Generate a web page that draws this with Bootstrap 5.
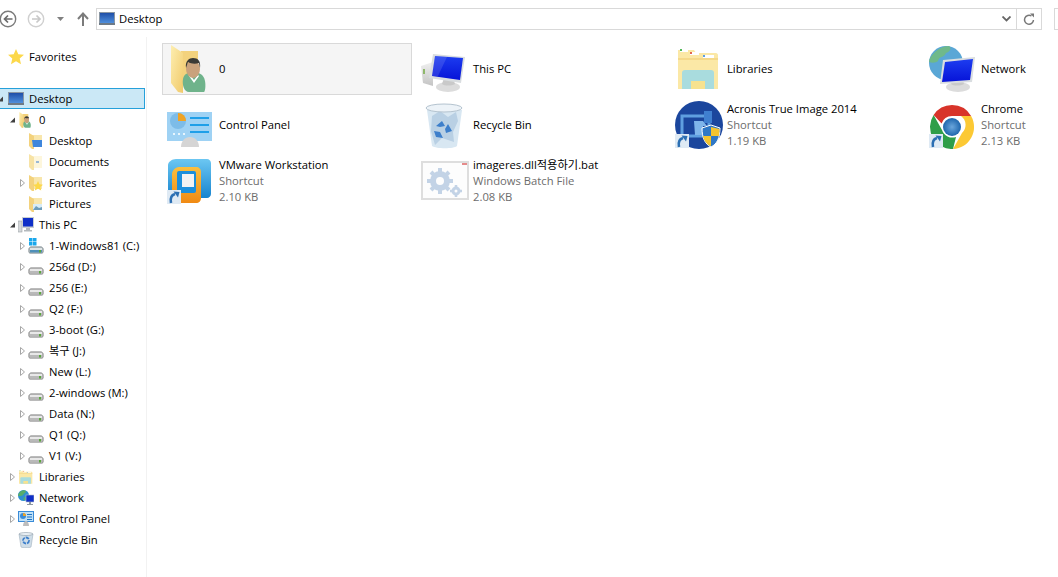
<!DOCTYPE html>
<html lang="en">
  <head>
    <meta charset="UTF-8" />
    <title>Desktop</title>
    <link rel="stylesheet" href="https://cdn.jsdelivr.net/npm/bootstrap@5.3.2/dist/css/bootstrap.min.css" />
    <script src="https://cdn.jsdelivr.net/npm/bootstrap@5.3.2/dist/js/bootstrap.bundle.min.js"></script>
    <style>
      html, body { height: 577px; overflow: hidden; }
      body { font-family: "Open Sans", "Noto Sans CJK KR", sans-serif; font-size: 11.25px; line-height: 16px; color: #000; background: #fff; }
      .icon-defs { display: block; width: 0; height: 0; }
      .topbar { height: 37px; padding-top: 1px; }
      .topbar svg { flex: none; }
      .gap-fwd { margin-left: 10px; }
      .gap-caret { margin-left: 12px; }
      .gap-up { margin-left: 13px; }
      .addr { flex: 1 1 auto; height: 22px; margin-left: 7px; border: 1px solid #d9d9d9; }
      .addr-text { flex: 1 1 auto; padding-left: 2px; }
      .addr-text svg { margin-right: 4px; }
      .addr-chev { width: 20px; }
      .addr-ref { width: 25px; border-left: 1px solid #d9d9d9; }
      .searchbox { flex: none; width: 4px; height: 22px; margin-left: 12px; border: 1px solid #d9d9d9; border-right: 0; }
      .main-area { height: 540px; }
      .nav-pane { flex: none; width: 147px; padding-top: 9px; border-right: 1px solid #f2f2f2; }
      .tree-row { height: 21px; white-space: nowrap; }
      .tree-row.lv1 { padding-left: 10px; }
      .tree-row.lv2 { padding-left: 20px; }
      .tree-row .arr { flex: none; width: 8px; height: 8px; }
      .tree-row .ico { flex: none; width: 16px; height: 16px; margin-right: 5px; }
      .tree-row.picked { background: #cbe8f6; border: 1px solid #26a0da; border-left: 0; margin-right: 1px; }
      .tree-gap { height: 21px; }
      .files { display: grid; grid-template-columns: repeat(3, 250px) 134px; grid-template-rows: 54px 56px 56px; column-gap: 4px; align-content: start; padding: 6px 0 0 15px; }
      .tile { padding-left: 5px; height: 56px; }
      .tile.top-tile { height: 52px; }
      .tile.hit { background: #f5f5f5; box-shadow: inset 0 0 0 1px #d9d9d9; }
      .tile svg { flex: none; width: 48px; height: 48px; margin-right: 4px; }
      .sub { color: #6d6d6d; }
    </style>
  </head>
  <body>
    <svg class="icon-defs" xmlns="http://www.w3.org/2000/svg">
      <defs>
        <linearGradient id="gY" x1="0" y1="0" x2="1" y2="1"><stop offset="0" stop-color="#fdeeb0"/><stop offset="1" stop-color="#f1ca6b"/></linearGradient>
        <linearGradient id="gB" x1="0" y1="0" x2="0" y2="1"><stop offset="0" stop-color="#1d3df0"/><stop offset="1" stop-color="#0613d8"/></linearGradient>
        <linearGradient id="gD" x1="0" y1="0" x2="0" y2="1"><stop offset="0" stop-color="#1f4fa8"/><stop offset="1" stop-color="#4f8fdc"/></linearGradient>
        <linearGradient id="gG" x1="0" y1="0" x2="0" y2="1"><stop offset="0" stop-color="#f0f0f0"/><stop offset="1" stop-color="#c4c4c4"/></linearGradient>
        <radialGradient id="gC"><stop offset="0" stop-color="#6aa6dc"/><stop offset="1" stop-color="#1f66ad"/></radialGradient>
        <linearGradient id="gV" x1="0" y1="0" x2="0" y2="1"><stop offset="0" stop-color="#6cc7f2"/><stop offset="1" stop-color="#1784cf"/></linearGradient>
        <linearGradient id="gO" x1="0" y1="0" x2="0" y2="1"><stop offset="0" stop-color="#fbbf3f"/><stop offset="1" stop-color="#f08a14"/></linearGradient>
      </defs>
      <symbol id="s-link" viewBox="0 0 48 48">
        <rect x="0" y="33" width="14" height="14" fill="#dfeaf4"/>
        <path d="M4 46c-1-5 .5-8 4-9" fill="none" stroke="#2b6fb3" stroke-width="2.600"/>
        <path d="M6.500 34.500l6 .5-1.500 5.500z" fill="#2b6fb3"/>
      </symbol>
      <symbol id="s-user" viewBox="0 0 48 48">
        <path d="M14 6h17v34H14z" fill="#f3d27d"/>
        <path d="M4 0l12 8v40L11 47 4 38z" fill="url(#gY)"/>
        <path d="M16 34c1-5 5-7 10-7s11 2 12 9c1 5 0 11-1 11H22c-5 0-7-7-6-13z" fill="#6fb38b"/>
        <path d="M23 30l4 5 4-5 1 1-5 7-5-7z" fill="#fff"/>
        <ellipse cx="26" cy="24" rx="7" ry="9" fill="#c9a27c"/>
        <path d="M19 23c-1-7 3-10 7-10 5 0 8 3 7 10l-1-5c-3 1-8 1-11-1z" fill="#3a3a36"/>
      </symbol>
      <symbol id="s-pc" viewBox="0 0 48 48">
        <path d="M0 21l12-4v24L2 38z" fill="url(#gG)"/>
        <rect x="2" y="24" width="2" height="5" fill="#8fb86b"/>
        <ellipse cx="27" cy="42" rx="12" ry="5" fill="#dcdcdc"/>
        <path d="M23 33h9l2 6c-4 2-10 2-13 0z" fill="#c9c9c9"/>
        <path d="M12 9l32 3-4 26-32-5z" fill="#d9dde0"/>
        <path d="M14 11l28 2-3 22-28-4z" fill="url(#gB)"/>
        <path d="M14 11l12 1-9 19-6 0z" fill="#fff" opacity=".12"/>
      </symbol>
      <symbol id="s-net" viewBox="0 0 48 48">
        <circle cx="17" cy="18" r="17" fill="#5aa7d6"/>
        <path d="M5 8c4-4 9-7 15-7 3 2 1 6-3 7-2 5-7 3-8 8-2 2-6 2-9 1 0-3 2-6 5-9zM18 22c5-1 7 3 5 8-1 3-4 4-6 3-2-4-3-8 1-11z" fill="#6fb98a"/>
        <ellipse cx="29" cy="42" rx="12" ry="5" fill="#dcdcdc"/>
        <path d="M25 32h8l2 7c-4 2-10 2-13 0z" fill="#c9c9c9"/>
        <path d="M14 15l32 -3-3 25-32 2z" fill="#d9dde0"/>
        <path d="M16 17l28-3-3 21-28 2z" fill="url(#gB)"/>
      </symbol>
      <symbol id="s-lib" viewBox="0 0 48 48">
        <path d="M3 5l16 0 2 3h20c1 0 2 1 2 2v34H3z" fill="#fbe8a6"/>
        <rect x="5" y="4" width="8" height="3" fill="#fff"/><rect x="15" y="7" width="9" height="3" fill="#fff"/><rect x="28" y="10" width="11" height="3" fill="#fff"/>
        <rect x="5" y="4" width="2" height="2" fill="#52b95a"/><rect x="15" y="7" width="2" height="2" fill="#e2654e"/><rect x="28" y="10" width="2" height="2" fill="#5f9fe0"/>
        <path d="M3 13h40v2H3z" fill="#f5d98a"/>
        <path d="M7 28c0-2 1-3 3-3h26c2 0 3 1 3 3v16H7z" fill="#a9dcde"/>
        <path d="M16 36h14v8H16z" fill="#f7e28f"/>
      </symbol>
      <symbol id="s-cp" viewBox="0 0 48 48">
        <rect x="0" y="11" width="45" height="29" fill="#9fd2f4"/>
        <circle cx="11" cy="20" r="8" fill="#7dbce8"/>
        <path d="M11 12a8 8 0 0 1 8 8h-8z" fill="#f0a324"/>
        <rect x="23" y="16" width="19" height="2" fill="#1f9fe8"/><rect x="23" y="23" width="19" height="2" fill="#1f9fe8"/><rect x="23" y="30" width="19" height="2" fill="#1f9fe8"/>
        <rect x="6" y="32" width="2" height="2" fill="#e8f5fd"/><rect x="11" y="32" width="2" height="2" fill="#e8f5fd"/><rect x="16" y="32" width="2" height="2" fill="#e8f5fd"/>
        <path d="M14 46c0-6 4-10 9-10s9 4 9 10z" fill="#d5d5d5"/>
      </symbol>
      <symbol id="s-bin" viewBox="0 0 48 48">
        <path d="M6 9h35l-5 36c-3 3-21 3-25 0z" fill="#d8e7f2"/>
        <path d="M11 15l8-5 8 6 8-5 2 9-5 11 1 10-12-4-7 7-4-14z" fill="#b9d0e4"/>
        <ellipse cx="23" cy="7" rx="18" ry="4" fill="#edf3f8" stroke="#b4c3cf"/>
        <path d="M15 25l6-5 3 5-5 1zM27 23l4 7-6 2-1-4zM13 30l6 1 3 6-7-1z" fill="#3d7fcb"/>
      </symbol>
      <symbol id="s-vm" viewBox="0 0 48 48">
        <path d="M9 2h31c2 0 4 2 4 4v31c0 2-2 4-4 4H9c-4 0-8-2-8-6V8c0-3 4-6 8-6z" fill="url(#gV)"/>
        <path d="M12 10h17c3 0 5 2 5 5v26c0 3-2 5-5 5H14c-6 0-9-4-9-8V17c0-3 3-7 7-7z" fill="url(#gO)"/>
        <rect x="10" y="14" width="19" height="22" rx="2" fill="#1c8fdc"/>
        <rect x="15" y="17" width="12" height="13" fill="#f2f2f2"/>
      </symbol>
      <symbol id="s-bat" viewBox="0 0 48 48">
        <rect x="1" y="5" width="46" height="37" fill="#fdfdfd" stroke="#dedede" stroke-width="2"/>
        <rect x="41" y="6" width="5" height="2" fill="#e58b8b"/>
        <g fill="none" stroke="#c3d3e6">
          <circle cx="19" cy="24" r="7" stroke-width="6"/>
          <path d="M19 11v4M19 33v4M6 24h4M28 24h4M10 15l3 3M25 30l3 3M28 15l-3 3M13 30l-3 3" stroke-width="4"/>
          <circle cx="35" cy="34" r="3" stroke-width="3"/>
          <path d="M35 28v2M35 38v2M29 34h2M39 34h2" stroke-width="2.5"/>
        </g>
      </symbol>
      <symbol id="s-acr" viewBox="0 0 48 48">
        <circle cx="24" cy="24" r="24" fill="#1b469d"/>
        <rect x="7" y="15" width="27" height="20" fill="none" stroke="#5f9fe0" stroke-width="3"/>
        <path d="M19 20h9l4 5h-4v9h-8z" fill="#7fb5ea"/>
        <path d="M29 10h8v12h-8z" fill="#3f7fd0"/>
        <path d="M36 24l9 3c0 10-3 16-9 19-6-3-9-9-9-19z" fill="#2f78c6" stroke="#fff"/>
        <path d="M36 26v9h8c0-3 .5-4 .5-7zM36 35v10c-5-2-7-6-8-10z" fill="#f4c430"/>
      </symbol>
      <symbol id="s-chr" viewBox="0 0 48 48">
        <circle cx="23" cy="26" r="22" fill="#fff"/>
        <path d="M23 4a22 22 0 0 1 19.1 11H23a11 11 0 0 0-10.4 7.500L4.600 14A22 22 0 0 1 23 4z" fill="#d8342a"/>
        <path d="M42.100 15A22 22 0 0 1 24 48L33 32a11 11 0 0 0-1-17z" fill="#fcc934"/>
        <path d="M4.600 14L13 29a11 11 0 0 0 14 7L24 48A22 22 0 0 1 4.600 14z" fill="#2f9e49"/>
        <circle cx="23" cy="26" r="9" fill="url(#gC)"/>
      </symbol>
      <symbol id="s-desk" viewBox="0 0 16 16">
        <rect x="0" y="1" width="16" height="13" fill="#8b97a3"/>
        <rect x="1" y="2" width="14" height="10" fill="url(#gD)"/>
        <rect x="0" y="12" width="16" height="2" fill="#6e7a86"/>
      </symbol>
      <symbol id="s-star" viewBox="0 0 16 16">
        <path d="M8 0l2.300 5.300 5.700.5-4.300 3.800 1.300 5.600L8 12.300 3 15.200l1.300-5.600L0 5.800l5.700-.5z" fill="#fcd84a"/>
      </symbol>
      <symbol id="s-fold" viewBox="0 0 16 16">
        <path d="M4 2h10v12H4z" fill="#f8e6ac"/>
        <path d="M1 0l5 3v13l-2 0-3-3z" fill="#f3d27d"/>
      </symbol>
      <symbol id="s-fold-desk" viewBox="0 0 16 16">
        <use href="#s-fold" width="16" height="16"/>
        <path d="M4 7h10v7H5z" fill="#3f86dc"/>
      </symbol>
      <symbol id="s-fold-doc" viewBox="0 0 16 16">
        <path d="M4 2h10v12H4z" fill="#fdf6dc"/>
        <path d="M1 0l5 3v13l-2 0-3-3z" fill="#f7e3a6"/>
        <rect x="8" y="7" width="3" height="2" fill="#9ab8d6"/>
      </symbol>
      <symbol id="s-fold-fav" viewBox="0 0 16 16">
        <use href="#s-fold" width="16" height="16"/>
        <path d="M10 6l1.500 3.300 3.500.4-2.600 2.300.8 3.500L10 13.700 6.800 15.500l.8-3.500L5 9.700l3.500-.4z" fill="#fcd84a"/>
      </symbol>
      <symbol id="s-fold-pic" viewBox="0 0 16 16">
        <use href="#s-fold" width="16" height="16"/>
        <path d="M5 8h9v6H5z" fill="#d8ecf6"/>
        <path d="M5 14l3-4 3 2 3-1v3z" fill="#6d9dbb"/>
      </symbol>
      <symbol id="s-pc16" viewBox="0 0 16 16">
        <rect x="0" y="4" width="4" height="11" fill="#d5d8da" stroke="#9aa0a4" stroke-width=".6"/>
        <rect x="4" y="0" width="12" height="11" fill="#c9ced2"/>
        <rect x="5" y="1" width="10" height="8.500" fill="#0f2fc8"/>
        <path d="M8 11h4v2h2v1.500H6V13h2z" fill="#b4b9bd"/>
      </symbol>
      <symbol id="s-net16" viewBox="0 0 16 16">
        <circle cx="5.500" cy="5.500" r="5.500" fill="#2f8fd0"/>
        <path d="M2 2c2-2 5-2 6-1 0 2-2 2-3 4-1 1-3 1-5 1 0-2 1-3 2-4zM6 7c2 0 2 2 1 3.500L5.500 10z" fill="#58ad6a"/>
        <rect x="8" y="5" width="8" height="7" fill="#0f2fc8" stroke="#b9c0c6" stroke-width=".6"/>
        <path d="M11 12h2v2h2v1H9v-1h2z" fill="#8e99a3"/>
      </symbol>
      <symbol id="s-cp16" viewBox="0 0 16 16">
        <rect x="0" y="0" width="16" height="11" fill="#3a8bd8"/>
        <rect x="1" y="1" width="14" height="9" fill="#bfe1f8"/>
        <circle cx="5" cy="5" r="3" fill="#3a8bd8"/>
        <path d="M5 2a3 3 0 0 1 3 3H5z" fill="#f0a324"/>
        <path d="M9 3h5v1H9zM9 5.500h5v1H9zM9 8h5v1H9z" fill="#2173c4"/>
        <path d="M5 15c0-3 1.500-5 3-5s3 2 3 5z" fill="#bdbdbd"/>
      </symbol>
      <symbol id="s-bin16" viewBox="0 0 16 16">
        <path d="M1 2h14l-2 13c-1 1-9 1-10 0z" fill="#cfdde8" stroke="#9fb0bd" stroke-width=".6"/>
        <ellipse cx="8" cy="2" rx="7" ry="1.500" fill="#e9eff4" stroke="#8d9ca8" stroke-width=".6"/>
        <circle cx="8" cy="8.500" r="3" fill="none" stroke="#3d7fcb" stroke-width="1.800" stroke-dasharray="3.500 1"/>
      </symbol>
      <symbol id="s-drive" viewBox="0 0 16 16">
        <path d="M3 9h10c1 0 2 1 2 2v3c0 1-1 1-1 1H2s-1 0-1-1v-3c0-1 1-2 2-2z" fill="#e8e8e8" stroke="#777"/>
        <rect x="2" y="12" width="12" height="2.500" fill="#b9b9b9"/>
        <rect x="11" y="12" width="2" height="2.500" fill="#5aa83c"/>
      </symbol>
      <symbol id="s-win" viewBox="0 0 16 16">
        <rect x="1" y="0" width="3.500" height="3.500" fill="#19a7ec"/><rect x="5" y="0" width="3.500" height="3.500" fill="#19a7ec"/><rect x="1" y="4" width="3.500" height="3.500" fill="#19a7ec"/><rect x="5" y="4" width="3.500" height="3.500" fill="#19a7ec"/>
        <path d="M3 9h10c1 0 2 1 2 2v3c0 1-1 1-1 1H2s-1 0-1-1v-3c0-1 1-2 2-2z" fill="#dfe4e6" stroke="#6d7a80"/>
        <rect x="2" y="12" width="12" height="2.500" fill="#4f8fb8"/>
        <rect x="11" y="12" width="2" height="2.500" fill="#5aa83c"/>
      </symbol>
      <symbol id="s-open" viewBox="0 0 8 8"><path d="M5 1.500V6.500H0z" fill="#404040"/></symbol>
      <symbol id="s-shut" viewBox="0 0 8 8"><path d="M.5.500l4 3.500-4 3.500z" fill="#fff" stroke="#a6a6a6"/></symbol>
    </svg>

    <div class="topbar d-flex align-items-center overflow-hidden">
      <svg width="17" height="18" viewBox="0 0 17 18"><circle cx="8" cy="9" r="7.700" fill="#fff" stroke="#7b7b7b" stroke-width="1.400"/><path d="M12.500 9H5M8 5.500L4.500 9 8 12.500" fill="none" stroke="#6b6b6b" stroke-width="1.700"/></svg>
      <svg class="gap-fwd" width="18" height="18" viewBox="0 0 18 18"><circle cx="9" cy="9" r="7.700" fill="#fff" stroke="#d0d0d0" stroke-width="1.400"/><path d="M5 9h7.500M9.500 5.500L13 9 9.500 12.500" fill="none" stroke="#c8c8c8" stroke-width="1.700"/></svg>
      <svg class="gap-caret" width="7" height="4" viewBox="0 0 7 4"><path d="M0 0h7L3.500 4z" fill="#808080"/></svg>
      <svg class="gap-up" width="12" height="14" viewBox="0 0 12 14"><path d="M6 14V2M1 7l5-5.500L11 7" fill="none" stroke="#7b7b7b" stroke-width="2"/></svg>
      <div class="addr d-flex align-items-center">
        <div class="addr-text d-flex align-items-center"><svg width="16" height="16"><use href="#s-desk"/></svg>Desktop</div>
        <div class="addr-chev d-flex align-items-center justify-content-center"><svg width="9" height="6" viewBox="0 0 9 6"><path d="M.5.500l4 4 4-4" fill="none" stroke="#666" stroke-width="1.800"/></svg></div>
        <div class="addr-ref h-100 d-flex align-items-center justify-content-center"><svg width="12" height="13" viewBox="0 0 12 13"><path d="M10.500 7a4.500 4.500 0 1 1-2-4" fill="none" stroke="#777" stroke-width="1.500"/><path d="M7 .500h4v4z" fill="#777"/></svg></div>
      </div>
      <div class="searchbox"></div>
    </div>

    <div class="main-area d-flex">
      <div class="nav-pane">
        <div class="tree-row d-flex align-items-center"><span class="arr"></span><svg class="ico"><use href="#s-star"/></svg>Favorites</div>
        <div class="tree-gap"></div>
        <div class="tree-row picked d-flex align-items-center"><svg class="arr"><use href="#s-open" x="-2"/></svg><svg class="ico"><use href="#s-desk"/></svg>Desktop</div>
        <div class="tree-row lv1 d-flex align-items-center"><svg class="arr"><use href="#s-open"/></svg><svg class="ico"><use href="#s-user"/></svg>0</div>
        <div class="tree-row lv2 d-flex align-items-center"><span class="arr"></span><svg class="ico"><use href="#s-fold-desk"/></svg>Desktop</div>
        <div class="tree-row lv2 d-flex align-items-center"><span class="arr"></span><svg class="ico"><use href="#s-fold-doc"/></svg>Documents</div>
        <div class="tree-row lv2 d-flex align-items-center"><svg class="arr"><use href="#s-shut"/></svg><svg class="ico"><use href="#s-fold-fav"/></svg>Favorites</div>
        <div class="tree-row lv2 d-flex align-items-center"><span class="arr"></span><svg class="ico"><use href="#s-fold-pic"/></svg>Pictures</div>
        <div class="tree-row lv1 d-flex align-items-center"><svg class="arr"><use href="#s-open"/></svg><svg class="ico"><use href="#s-pc16"/></svg>This PC</div>
        <div class="tree-row lv2 d-flex align-items-center"><svg class="arr"><use href="#s-shut"/></svg><svg class="ico"><use href="#s-win"/></svg>1-Windows81 (C:)</div>
        <div class="tree-row lv2 d-flex align-items-center"><svg class="arr"><use href="#s-shut"/></svg><svg class="ico"><use href="#s-drive"/></svg>256d (D:)</div>
        <div class="tree-row lv2 d-flex align-items-center"><svg class="arr"><use href="#s-shut"/></svg><svg class="ico"><use href="#s-drive"/></svg>256 (E:)</div>
        <div class="tree-row lv2 d-flex align-items-center"><svg class="arr"><use href="#s-shut"/></svg><svg class="ico"><use href="#s-drive"/></svg>Q2 (F:)</div>
        <div class="tree-row lv2 d-flex align-items-center"><svg class="arr"><use href="#s-shut"/></svg><svg class="ico"><use href="#s-drive"/></svg>3-boot (G:)</div>
        <div class="tree-row lv2 d-flex align-items-center"><svg class="arr"><use href="#s-shut"/></svg><svg class="ico"><use href="#s-drive"/></svg>복구 (J:)</div>
        <div class="tree-row lv2 d-flex align-items-center"><svg class="arr"><use href="#s-shut"/></svg><svg class="ico"><use href="#s-drive"/></svg>New (L:)</div>
        <div class="tree-row lv2 d-flex align-items-center"><svg class="arr"><use href="#s-shut"/></svg><svg class="ico"><use href="#s-drive"/></svg>2-windows (M:)</div>
        <div class="tree-row lv2 d-flex align-items-center"><svg class="arr"><use href="#s-shut"/></svg><svg class="ico"><use href="#s-drive"/></svg>Data (N:)</div>
        <div class="tree-row lv2 d-flex align-items-center"><svg class="arr"><use href="#s-shut"/></svg><svg class="ico"><use href="#s-drive"/></svg>Q1 (Q:)</div>
        <div class="tree-row lv2 d-flex align-items-center"><svg class="arr"><use href="#s-shut"/></svg><svg class="ico"><use href="#s-drive"/></svg>V1 (V:)</div>
        <div class="tree-row lv1 d-flex align-items-center"><svg class="arr"><use href="#s-shut"/></svg><svg class="ico"><use href="#s-lib"/></svg>Libraries</div>
        <div class="tree-row lv1 d-flex align-items-center"><svg class="arr"><use href="#s-shut"/></svg><svg class="ico"><use href="#s-net16"/></svg>Network</div>
        <div class="tree-row lv1 d-flex align-items-center"><svg class="arr"><use href="#s-shut"/></svg><svg class="ico"><use href="#s-cp16"/></svg>Control Panel</div>
        <div class="tree-row lv1 d-flex align-items-center"><span class="arr"></span><svg class="ico"><use href="#s-bin16"/></svg>Recycle Bin</div>
      </div>

      <div class="files flex-grow-1">
        <div class="tile top-tile hit d-flex align-items-center"><svg><use href="#s-user"/></svg><div>0</div></div>
        <div class="tile top-tile d-flex align-items-center"><svg><use href="#s-pc"/></svg><div>This PC</div></div>
        <div class="tile top-tile d-flex align-items-center"><svg><use href="#s-lib"/></svg><div>Libraries</div></div>
        <div class="tile top-tile d-flex align-items-center"><svg><use href="#s-net"/></svg><div>Network</div></div>

        <div class="tile d-flex align-items-center"><svg><use href="#s-cp"/></svg><div>Control Panel</div></div>
        <div class="tile d-flex align-items-center"><svg><use href="#s-bin"/></svg><div>Recycle Bin</div></div>
        <div class="tile d-flex align-items-center"><svg><use href="#s-acr"/><use href="#s-link"/></svg><div><div>Acronis True Image 2014</div><div class="sub">Shortcut</div><div class="sub">1.19 KB</div></div></div>
        <div class="tile d-flex align-items-center"><svg><use href="#s-chr"/><use href="#s-link"/></svg><div><div>Chrome</div><div class="sub">Shortcut</div><div class="sub">2.13 KB</div></div></div>

        <div class="tile d-flex align-items-center"><svg><use href="#s-vm"/><use href="#s-link"/></svg><div><div>VMware Workstation</div><div class="sub">Shortcut</div><div class="sub">2.10 KB</div></div></div>
        <div class="tile d-flex align-items-center"><svg><use href="#s-bat"/></svg><div><div>imageres.dll적용하기.bat</div><div class="sub">Windows Batch File</div><div class="sub">2.08 KB</div></div></div>
      </div>
    </div>
  </body>
</html>
